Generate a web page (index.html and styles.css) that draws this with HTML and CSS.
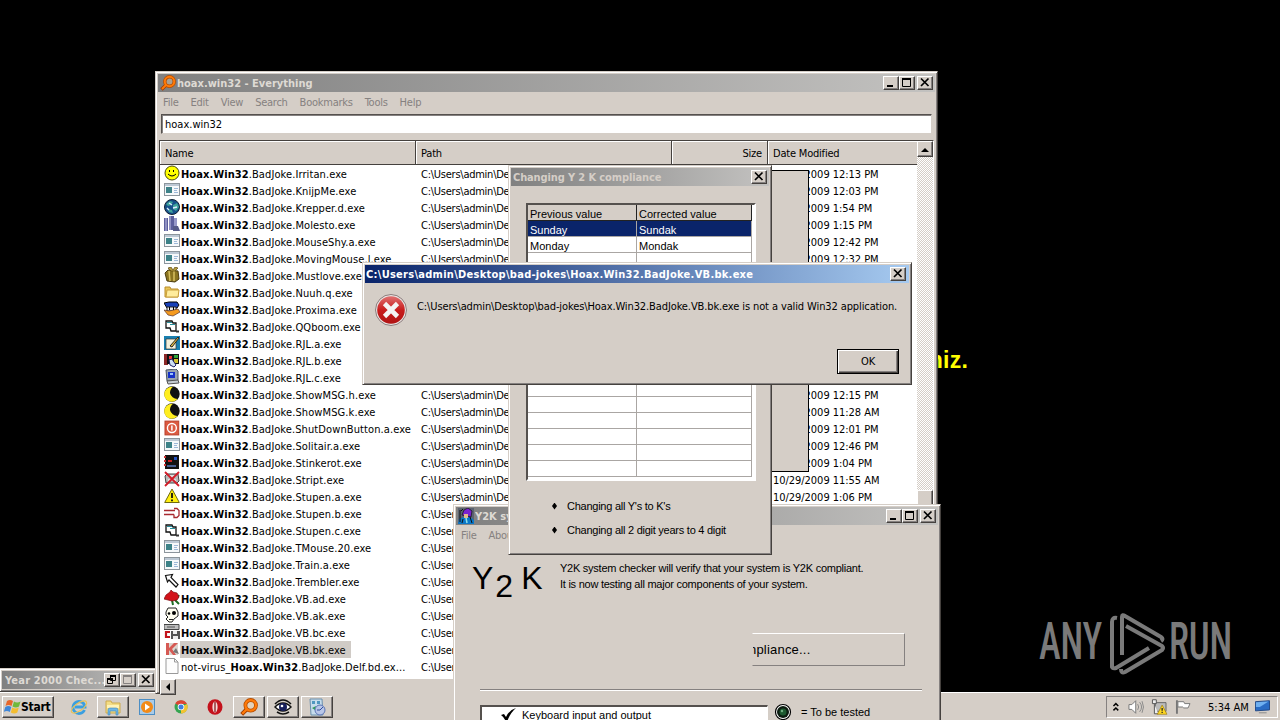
FILE: index.html
```
<!DOCTYPE html>
<html lang="en">
<head>
    <meta charset="UTF-8">
    <title>Desktop</title>
    <link rel="stylesheet" href="styles.css">
</head>
<body>
    <!-- icon sprite -->
    <svg class="sprite" width="0" height="0">
        <symbol id="i-smile" viewBox="0 0 16 16"><circle cx="8" cy="8" r="7" fill="#ff0" stroke="#4a4a10"/><path d="M5.500 5v2M9.500 5v2" stroke="#000"/><path d="M4 9q4 4 8 0" fill="none" stroke="#000"/></symbol>
        <symbol id="i-app" viewBox="0 0 16 16"><rect x=".5" y="1.500" width="15" height="12" fill="#f6f8fa" stroke="#8c959c"/><path d="M1 3h14" stroke="#bcc8d4" stroke-width="2"/><rect x="2" y="5" width="6" height="6" fill="#3d8288"/><path d="M10 6.500h4M10 8.500h3M10 10.500h4" stroke="#9db8d8"/></symbol>
        <symbol id="i-globe" viewBox="0 0 16 16"><circle cx="8" cy="8" r="7.500" fill="#17508a" stroke="#123"/><path d="M2 5l4-3 3 1-2 3-3 1zM9 6l4-2 2 4-3 4-3-2zM4 10l4 1 1 3-4-1z" fill="#3fa39a"/><path d="M5 4l3 2M9 9l4-1M3 9l2 2" stroke="#def" stroke-width="1.300"/></symbol>
        <symbol id="i-books" viewBox="0 0 16 16"><path d="M0 2h4v13H0zM5 0h5v14H5z" fill="#5c5f9c"/><path d="M10 2h3v9h-3z" fill="#9698c8"/><path d="M2 2v13M6 0v14" stroke="#c3c4e8"/><path d="M9 10h5l2 5H9z" fill="#555a88"/></symbol>
        <symbol id="i-gift" viewBox="0 0 16 16"><path d="M1 6l3-3 10 1 1 8-4 3-8-1z" fill="#8a7420" stroke="#4c3d10"/><path d="M5 4l1 10M10 4v10" stroke="#d8c060" stroke-width="1.500"/><path d="M7 4L4 1l3-1 2 3 2-3 3 1-3 3z" fill="#b49b3c" stroke="#5b4710" stroke-width=".7"/></symbol>
        <symbol id="i-folder" viewBox="0 0 16 16"><path d="M1 13V3h5l1 2h7v8z" fill="#e9c557" stroke="#b98d2a"/><path d="M2 13l1-7h12l-1 7z" fill="#ffec9c" stroke="#c99f3c"/></symbol>
        <symbol id="i-duck" viewBox="0 0 16 16"><path d="M0 2l5-1 8 0 2 3-2 3H3z" fill="#1840b8" stroke="#000"/><path d="M3 6h9v4H3z" fill="#eee" stroke="#222"/><path d="M0 9l5 1 9-2 2 3-7 4-5-1z" fill="#f59a1e" stroke="#533" stroke-width=".7"/><path d="M5.500 6v3M9.500 6v3" stroke="#000"/></symbol>
        <symbol id="i-vb" viewBox="0 0 16 16"><path d="M2 3h6l1 2h3v8H7l-1-3H2z" fill="#fff" stroke="#111" stroke-width="1.300"/><path d="M3 4.500h5M6 6.500h5" stroke="#278f9c"/><path d="M12 13.500h3" stroke="#333" stroke-width="2"/></symbol>
        <symbol id="i-pen" viewBox="0 0 16 16"><path d="M0 1h16v14H0z" fill="#1980b0"/><path d="M2 4h10v10H2z" fill="#f4f1dc" stroke="#333" stroke-width=".7"/><path d="M6 11l8-9 1 1-7 9z" fill="#e6bd40" stroke="#222"/></symbol>
        <symbol id="i-win" viewBox="0 0 16 16"><path d="M0 2h4v11H0z" fill="#8b2828"/><path d="M3 2h12v10H3z" fill="#111"/><path d="M5 4h3v3H5z" fill="#e33"/><path d="M10 3h4v3h-4z" fill="#2fa63a"/><path d="M10 7h4v4h-4z" fill="#d5c02a"/><path d="M5 8l3-1 4 6-2 2-4-2z" fill="#cfe1f4" stroke="#226"/></symbol>
        <symbol id="i-pc" viewBox="0 0 16 16"><path d="M2 1l10-1 2 2v9l-2 1H3z" fill="#9aa5b0" stroke="#4a5560"/><path d="M4 3h7v6H4z" fill="#1532c8"/><path d="M6 4h3v2H6z" fill="#9ac4ff"/><path d="M3 12l11-1 1 3-11 1z" fill="#c6ccd2" stroke="#555"/></symbol>
        <symbol id="i-moon" viewBox="0 0 16 16"><circle cx="8" cy="8" r="7.700" fill="#111"/><path d="M9 .8a7.500 7.500 0 1 0 4.500 12.200A7.500 7.500 0 0 1 6 7q0-4 3-6.200z" fill="#ffee20"/></symbol>
        <symbol id="i-power" viewBox="0 0 16 16"><rect x="1" y="1" width="14" height="14" fill="#dc5a41" stroke="#b8402c"/><circle cx="8" cy="8" r="4.500" fill="none" stroke="#fff" stroke-width="1.400"/><path d="M8 5.500v5" stroke="#fff" stroke-width="1.500"/></symbol>
        <symbol id="i-stink" viewBox="0 0 16 16"><path d="M1 1h14v14H1z" fill="#111"/><path d="M0 3h2M0 7h2M0 11h2" stroke="#c33" stroke-width="2"/><path d="M4 6h4v2H4z" fill="#c22"/><path d="M10 3h3v3h-3z" fill="#2653c0"/><path d="M3 12h9" stroke="#5a78bb" stroke-width="1.500"/></symbol>
        <symbol id="i-cross" viewBox="0 0 16 16"><path d="M1 5l2-2h11l1 7-2 2H2z" fill="#b9b9b9" stroke="#444"/><path d="M4 5h8M4 9h8" stroke="#eee" stroke-width="1.500"/><path d="M1 1l14 14M15 1L1 15" stroke="#d41c28" stroke-width="1.800"/></symbol>
        <symbol id="i-warn" viewBox="0 0 16 16"><path d="M8 1l7.300 13.500H.7z" fill="#ffee10" stroke="#706a10"/><path d="M8 5v5" stroke="#111" stroke-width="1.800"/><path d="M8 11.500v1.700" stroke="#111" stroke-width="1.800"/></symbol>
        <symbol id="i-fork" viewBox="0 0 16 16"><path d="M0 5.500h11M0 9.500h10M10 3.500h3l2 2v5l-2 2h-3v-3" fill="none" stroke="#a82a30" stroke-width="1.300"/></symbol>
        <symbol id="i-arrow" viewBox="0 0 16 16"><path d="M1.500 2.500l7-1-1.500 3 7 7-2 2.500-7-7-1.500 2z" fill="#fff" stroke="#111" stroke-width="1.200"/></symbol>
        <symbol id="i-rose" viewBox="0 0 16 16"><path d="M8 10l1 5M11 10l4 4M15 5l-2 3" stroke="#1c6d22" stroke-width="2"/><path d="M0 9l2-4 4-3 1-2 2 2 4 1 2 4-2 3-5 1-4-1z" fill="#d3131a" stroke="#7a0c10" stroke-width=".7"/></symbol>
        <symbol id="i-skull" viewBox="0 0 16 16"><path d="M2 5l2-4h8l2 4v4l-4 3-2 3H5l-3-3 2-2-2-2z" fill="#fffef0" stroke="#222"/><circle cx="5" cy="6.500" r="1.300"/><circle cx="10" cy="6" r="2"/><path d="M5 12.500h4" stroke="#222"/></symbol>
        <symbol id="i-disk" viewBox="0 0 16 16"><path d="M0 .5h15v5H0z" fill="#bdbdbd" stroke="#444"/><path d="M3 3h8" stroke="#555"/><path d="M7 7h9v8H7z" fill="#555"/><path d="M9 7h4v3H9zM9 12h5v3H9z" fill="#eee"/><path d="M6 8H2v5h4" fill="none" stroke="#c2141c" stroke-width="2.200"/></symbol>
        <symbol id="i-kasper" viewBox="0 0 16 16"><path d="M2 2h12v12H2z" fill="#dcd6d0"/><path d="M2 2h3v5l5-5h4L8 8l4 6H9L5 9v5H2z" fill="#d65a54"/><path d="M9 11l3-4 3 6z" fill="#777"/></symbol>
        <symbol id="i-file" viewBox="0 0 16 16"><path d="M2 .5h8.500L14 4v11.500H2z" fill="#fdfdfd" stroke="#999"/><path d="M10.500.5V4H14" fill="none" stroke="#999"/></symbol>
        <symbol id="i-search" viewBox="0 0 16 16"><path d="M6 10l-4.500 4.500" stroke="#a03c00" stroke-width="3.600"/><circle cx="9.500" cy="6.500" r="4.700" fill="#ffd9a8" fill-opacity=".35" stroke="#b44c00" stroke-width="3.400"/><circle cx="9.500" cy="6.500" r="4.700" fill="none" stroke="#ff7a08" stroke-width="2"/><path d="M6 10l-4 4" stroke="#ff7a08" stroke-width="2"/></symbol>
        <symbol id="i-wizard" viewBox="0 0 16 16"><path d="M0 0h16v16H0z" fill="#5b6370"/><path d="M0 16l1-5 5-2h6l4 3v4z" fill="#0b77c8"/><path d="M4 7l2-5 4-2 4 3-1 6z" fill="#7a22d0" stroke="#111" stroke-width=".7"/><path d="M6 6h4v4H6z" fill="#e6b98a"/><path d="M2 2v12M3 3l2-2M12 9l2 6M5 11l-1 4" stroke="#111"/><path d="M8 10l1 5" stroke="#8fe0e8" stroke-width="1.500"/></symbol>
        <symbol id="i-min" viewBox="0 0 12 11"><path d="M2 9h6" stroke="#000" stroke-width="2"/></symbol>
        <symbol id="i-max" viewBox="0 0 12 11"><path d="M1.500 1.500h8v8h-8z" fill="none" stroke="currentColor"/><path d="M1 2h9" stroke="currentColor" stroke-width="2"/></symbol>
        <symbol id="i-restore" viewBox="0 0 12 11"><path d="M4.500 1.500h5v5h-5z" fill="none" stroke="#000"/><path d="M4 2h6M1 5h6" stroke="#000" stroke-width="2"/><path d="M1.500 4.500h5v5h-5z" fill="none" stroke="#000"/></symbol>
        <symbol id="i-close" viewBox="0 0 12 11"><path d="M2 1.500l7.500 7.500M9.500 1.500L2 9" stroke="#000" stroke-width="1.700"/></symbol>
    </svg>

    <div class="desktop">
        <div class="joke-text">niz.</div>

        <svg class="watermark" viewBox="0 0 200 70" width="200" height="70">
            <g fill="#7a7a7a" font-family="Roboto, sans-serif" font-size="52" font-weight="500">
                <text x="4" y="54" textLength="63" lengthAdjust="spacingAndGlyphs">ANY</text>
                <text x="134" y="54" textLength="63" lengthAdjust="spacingAndGlyphs">RUN</text>
            </g>
            <g fill="none" stroke="#7a7a7a" stroke-width="4" stroke-linejoin="round">
                <path d="M82 13q-5-1-5 4v45q1 2 4 1l33-20"/>
                <path d="M87 50V12q0-3 3-1l36 21q3 2 0 4"/>
                <path d="M91 21l36 20q2 2 0 4L90 67q-4 2-4-3"/>
            </g>
        </svg>

        <div class="window mdi">
            <div class="titlebar">
                <span class="title">Year 2000 Chec...</span>
                <span class="btn"><svg><use href="#i-restore"/></svg></span>
                <span class="btn off"><svg><use href="#i-max"/></svg></span>
                <span class="btn close"><svg><use href="#i-close"/></svg></span>
            </div>
        </div>

        <div class="taskbar">
            <div class="start">
                <svg width="17" height="16" viewBox="0 0 17 16"><path d="M3 2q3-2 6 0L7.500 7q-3-2-6 0z" fill="#e8662a"/><path d="M10 2.500q3 2 6.500 0L15 7.500q-3 2-6.500 0z" fill="#71b93c"/><path d="M1.300 8q3-2 6 0L5.800 13q-3-2-6 0z" fill="#3f86d8"/><path d="M8.300 8.500q3 2 6.500 0l-1.500 5q-3 2-6.500 0z" fill="#f4bd30"/></svg>
                <b>Start</b>
            </div>
            <div class="tasks">
                <span class="task"><svg viewBox="0 0 18 18"><path d="M14.500 12a6 6 0 1 1 .5-3H5" fill="none" stroke="#3a9fe0" stroke-width="2.800"/><ellipse cx="9" cy="9" rx="9" ry="3.800" transform="rotate(-35 9 9)" fill="none" stroke="#e8c25a" stroke-width="1.200"/></svg></span>
                <span class="task open"><svg viewBox="0 0 18 18"><path d="M2 15V3h5l1 2h8v10z" fill="#f3dc84" stroke="#cdaa4c"/><path d="M3 7h12v3H3z" fill="#fff3b8"/><path d="M4 17v-5q0-2 2-2h6q2 0 2 2v5h-2v-4H6v4z" fill="#6db6e6" stroke="#3f86b8" stroke-width=".6"/></svg></span>
                <span class="task"><svg viewBox="0 0 18 18"><rect x="1.500" y="1.500" width="15" height="15" fill="#a9cbe8" stroke="#4c8ec4"/><circle cx="9" cy="9" r="6" fill="#f28a18"/><path d="M7 5.500l5 3.500-5 3.500z" fill="#fff"/></svg></span>
                <span class="task"><svg viewBox="0 0 18 18"><circle cx="9" cy="9" r="6.500" fill="#35a450"/><path d="M9 9L3.300 5.500A6.600 6.600 0 0 1 15 6H9z" fill="#dc4434"/><path d="M9 9l6-3a6.600 6.600 0 0 1-6 9.500z" fill="#f3c330"/><circle cx="9" cy="9" r="3.300" fill="#fff"/><circle cx="9" cy="9" r="2.500" fill="#3f7ede"/></svg></span>
                <span class="task"><svg viewBox="0 0 18 18"><ellipse cx="9" cy="9" rx="7.500" ry="7.800" fill="#c4121c"/><ellipse cx="9" cy="9" rx="2.600" ry="5.600" fill="#f4d8d8"/><path d="M9 4v10" stroke="#7a0c10" stroke-width="1.200"/></svg></span>
                <span class="task open"><svg viewBox="0 0 16 16"><use href="#i-search"/></svg></span>
                <span class="task open"><svg viewBox="0 0 18 18"><path d="M1 9q8-8 16 0-8 8-16 0z" fill="#fff" stroke="#111" stroke-width="1.500"/><circle cx="9" cy="9" r="4" fill="#18205c"/><circle cx="8" cy="8" r="1.300" fill="#fff"/><path d="M1 6q8-8 16 0M3 14q6 4 12 0" fill="none" stroke="#111" stroke-width="1.600"/></svg></span>
                <span class="task open"><svg viewBox="0 0 18 18"><path d="M2 1h12l1 16H3z" fill="#c6dcec" stroke="#6b90ae"/><path d="M4 3h3v3H4zM9 3h3v3H9z" fill="#4f97c0"/><path d="M4 10l4-2-1 4z" fill="#2f9c5a"/><circle cx="12" cy="12" r="5" fill="#b8c6e8" stroke="#5c74b4"/><path d="M12 12l3-3M12 12H9" stroke="#334c9c"/></svg></span>
            </div>
            <div class="tray">
                <svg width="9" height="12" viewBox="0 0 9 12"><path d="M1.500 5l2.500-2.500L6.500 5M1.500 9.500L4 7l2.500 2.500" fill="none" stroke="#000" stroke-width="1.500"/></svg>
                <svg width="17" height="16" viewBox="0 0 17 16"><path d="M1 5.500h3l4-4v13l-4-4H1z" fill="#fff" stroke="#777"/><path d="M10 5q2 3 0 6M12 3q4 5 0 10M14.500 2q3 6 0 12" fill="none" stroke="#888"/></svg>
                <svg width="17" height="16" viewBox="0 0 17 16"><path d="M4.500 3.500h11v9h-11z" fill="#bbb" stroke="#666"/><path d="M1.500.5h4v4h-4zM3.500 5v10h4" fill="#eee" stroke="#555"/><path d="M11.500 6l5 9.500h-10z" fill="#ffd820" stroke="#9a7a10" stroke-width=".7"/><path d="M11.500 9v3M11.500 13v1.300" stroke="#222" stroke-width="1.300"/></svg>
                <svg width="17" height="16" viewBox="0 0 17 16"><path d="M2 1v14" stroke="#777" stroke-width="2"/><path d="M3 2.500h6l1 2h5.500l-2 4.500H9L8 8H3z" fill="#fff" stroke="#777"/></svg>
                <span class="clock">5:34 AM</span>
                <svg width="16" height="14" viewBox="0 0 16 14"><path d="M.5 1.500L15 .5v9.500l-14.500 1z" fill="#2a6cc4" stroke="#234a86"/><path d="M1 2l13-.8L5 7 1 7z" fill="#6fb0f0"/><path d="M4 13h8" stroke="#888"/></svg>
            </div>
        </div>

        <div class="window everything">
            <div class="titlebar">
                <svg class="title-icon"><use href="#i-search"/></svg>
                <span class="title">hoax.win32 - Everything</span>
                <span class="btn"><svg><use href="#i-min"/></svg></span>
                <span class="btn"><svg><use href="#i-max"/></svg></span>
                <span class="btn close"><svg><use href="#i-close"/></svg></span>
            </div>
            <div class="menu">
                <span>File</span><span>Edit</span><span>View</span><span>Search</span><span>Bookmarks</span><span>Tools</span><span>Help</span>
            </div>
            <div class="query">hoax.win32</div>
            <div class="results">
                <div class="table">
                    <div class="cols head">
                        <span>Name</span><span>Path</span><span class="size">Size</span><span>Date Modified</span>
                    </div>
                    <div id="rows"></div>
                    <div class="hscroll"><span class="arrow"><svg width="6" height="8"><path d="M5 0v8L1 4z"/></svg></span></div>
                </div>
                <div class="vscroll">
                    <span class="arrow"><svg width="8" height="5"><path d="M0 5h8L4 1z"/></svg></span>
                    <span class="thumb"></span>
                </div>
            </div>
        </div>

        <div class="panel"></div>

        <div class="window y2k">
            <div class="titlebar">
                <svg class="title-icon"><use href="#i-wizard"/></svg>
                <span class="title">Y2K system checker</span>
                <span class="btn"><svg><use href="#i-min"/></svg></span>
                <span class="btn"><svg><use href="#i-max"/></svg></span>
                <span class="btn close"><svg><use href="#i-close"/></svg></span>
            </div>
            <div class="menu"><span>File</span><span>About</span></div>
            <div class="intro">
                <div class="y2k-logo"><span>Y</span><span class="two">2</span><span>K</span></div>
                <div class="intro-text">
                    <p>Y2K system checker will verify that your system is Y2K compliant.</p>
                    <p>It is now testing all major components of your system.</p>
                </div>
            </div>
            <div class="big-button"><span>npliance...</span></div>
            <div class="rule"></div>
            <div class="tests">
                <div class="test-list">
                    <svg width="16" height="16" viewBox="0 0 16 16"><path d="M0 8l3-1 2 3q3-7 10-9-6 5-9 14H5Q3 10 0 8z"/></svg>
                    <span>Keyboard input and output</span>
                </div>
                <svg class="led" width="18" height="18" viewBox="0 0 18 18"><circle cx="9" cy="9" r="7.500" fill="#fff" stroke="#000" stroke-width="1.200"/><circle cx="9" cy="9" r="6" fill="#0c1c10"/><circle cx="9" cy="9" r="3.500" fill="#1d5a30"/><circle cx="8" cy="8" r="1.200" fill="#6fae80"/></svg>
                <span class="legend">= To be tested</span>
            </div>
        </div>

        <div class="window changing">
            <div class="titlebar">
                <span class="title">Changing Y 2 K compliance</span>
                <span class="btn close"><svg><use href="#i-close"/></svg></span>
            </div>
            <div class="grid-box">
                <div class="grid-row grid-head"><span>Previous value</span><span>Corrected value</span></div>
                <div class="grid-row selected"><span>Sunday</span><span>Sundak</span></div>
                <div class="grid-row"><span>Monday</span><span>Mondak</span></div>
                <div id="emptyRows"></div>
            </div>
            <ul class="steps">
                <li><i></i><span>Changing all Y's to K's</span></li>
                <li><i></i><span>Changing all 2 digit years to 4 digit</span></li>
            </ul>
        </div>

        <div class="window error">
            <div class="titlebar">
                <span class="title">C:\Users\admin\Desktop\bad-jokes\Hoax.Win32.BadJoke.VB.bk.exe</span>
                <span class="btn close"><svg><use href="#i-close"/></svg></span>
            </div>
            <div class="message">
                <svg width="34" height="34" viewBox="0 0 34 34"><defs><linearGradient id="red" x2="0" y2="1"><stop offset="0" stop-color="#e07070"/><stop offset=".5" stop-color="#c81c1c"/><stop offset="1" stop-color="#b01414"/></linearGradient></defs><circle cx="17" cy="17" r="15.500" fill="#e8e4e2" stroke="#8c7c7c"/><circle cx="17" cy="17" r="13.800" fill="url(#red)"/><path d="M10.500 10.500l13 13M23.500 10.500l-13 13" stroke="#f4f4f4" stroke-width="4.600"/></svg>
                <p>C:\Users\admin\Desktop\bad-jokes\Hoax.Win32.BadJoke.VB.bk.exe is not a valid Win32 application.</p>
            </div>
            <div class="ok"><span>OK</span></div>
        </div>
    </div>
    <script src="script.js"></script>
</body>
</html>
```
FILE: styles.css
```
* {
    margin: 0;
    padding: 0;
    box-sizing: border-box;
}

body {
    width: 1280px;
    height: 720px;
    overflow: hidden;
    background: #000;
    color: #000;
    font-family: "DejaVu Sans Condensed", "DejaVu Sans", sans-serif;
    font-stretch: condensed;
    font-size: 11px;
    line-height: 16px;
    letter-spacing: -0.25px;
    white-space: nowrap;
}

.sprite {
    position: absolute;
}

.desktop {
    position: relative;
    width: 1280px;
    height: 720px;
    overflow: hidden;
}

.joke-text {
    position: absolute;
    right: 312px;
    top: 346px;
    color: #ff0;
    font: bold 23px/28px "Liberation Sans", sans-serif;
    letter-spacing: 0.2px;
}

.watermark {
    position: absolute;
    left: 1035px;
    top: 605px;
    overflow: visible;
}

/* windows */
.window {
    position: absolute;
    background: #d5cec7;
    border: 1px solid;
    border-color: #d5cec7 #45413e #45413e #d5cec7;
    box-shadow: inset 1px 1px #fff, inset -1px -1px #858180;
    padding: 2px;
}

.titlebar {
    display: flex;
    align-items: center;
    height: 18px;
    padding: 0 2px;
    background: linear-gradient(to right, #808080, #c3c2c0);
    color: #dedad4;
    font-weight: bold;
    letter-spacing: 0;
}

.title {
    flex: 1;
    padding-top: 2px;
    overflow: hidden;
}

.title-icon {
    width: 16px;
    height: 16px;
    margin-right: 1px;
}

.btn {
    width: 16px;
    height: 14px;
    background: #d5cec7;
    border: 1px solid;
    border-color: #fff #45413e #45413e #fff;
    box-shadow: inset -1px -1px #858180;
    color: #000;
}

.btn svg {
    display: block;
    width: 12px;
    height: 11px;
    margin-left: 1px;
}

.btn.off {
    color: #858180;
}

.btn.close {
    margin-left: 2px;
}

.menu {
    display: flex;
    height: 20px;
    padding-top: 2px;
    align-items: center;
    color: #858180;
}

/* minimized child window */
.mdi {
    left: -1px;
    top: 668px;
    width: 158px;
    height: 24px;
}

.mdi .titlebar {
    padding: 0 0 0 3px;
}

.mdi .title {
    letter-spacing: 0.2px;
}

/* Everything */
.everything {
    left: 155px;
    top: 71px;
    width: 783px;
    height: 623px;
}

.everything .menu {
    padding-left: 5px;
    gap: 12px;
}

.query {
    height: 20px;
    margin: 2px 3px 6px 3px;
    padding: 2px 3px;
    background: #fff;
    border: 1px solid;
    border-color: #55514e #d5cec7 #d5cec7 #55514e;
    box-shadow: inset 1px 1px #858180;
    letter-spacing: 0;
}

.results {
    display: flex;
    height: 553px;
    margin: 0 1px;
    border: 1px solid #45413e;
    border-right-color: #fff;
}

.table {
    width: 757px;
    background: #fff;
}

.cols {
    display: grid;
    grid-template-columns: 256px 256px 96px 149px;
    grid-template-rows: 17px;
    height: 17px;
}

.head {
    grid-template-rows: 23px;
    height: 24px;
    background: #d5cec7;
    border-bottom: 1px solid #45413e;
    letter-spacing: -0.2px;
}

.head span {
    padding: 5px 5px 0;
    border-right: 1px solid #45413e;
    box-shadow: inset 1px 1px #fff;
}

.head span:last-child {
    border-right: 0;
}

.head .size {
    text-align: right;
}

.name {
    display: flex;
    height: 17px;
    padding-left: 4px;
    letter-spacing: 0.1px;
}

.name svg {
    width: 16px;
    height: 16px;
}

.name span {
    height: 17px;
    padding: 1px 5px 0 1px;
    line-height: 18px;
}

.name b {
    letter-spacing: 0.07px;
}

.picked .name span {
    background: #d0cbc6;
}

.cell {
    height: 17px;
    padding: 1px 0 0 5px;
    line-height: 18px;
    overflow: hidden;
}

.date {
    letter-spacing: -0.04px;
}

.hscroll {
    height: 16px;
    margin-top: 4px;
    background: #d5cec7;
}

.arrow {
    display: flex;
    width: 16px;
    height: 16px;
    align-items: center;
    justify-content: center;
    background: #d5cec7;
    border: 1px solid;
    border-color: #fff #45413e #45413e #fff;
    box-shadow: inset -1px -1px #858180;
}

.vscroll {
    width: 16px;
    background: repeating-conic-gradient(#d5cec7 0 25%, #fff 0 50%) 0 0 / 2px 2px;
}

.thumb {
    display: block;
    height: 60px;
    margin-top: 333px;
    background: #d5cec7;
    border: 1px solid;
    border-color: #fff #45413e #45413e #fff;
    box-shadow: inset -1px 0 #858180;
}

.panel {
    position: absolute;
    left: 760px;
    top: 170px;
    width: 49px;
    height: 302px;
    background: #d5cec7;
    border: 1px solid #000;
}

/* Y2K checker */
.y2k {
    left: 453px;
    top: 504px;
    width: 488px;
    height: 230px;
    font-family: "Liberation Sans", sans-serif;
}

.y2k .titlebar,
.y2k .menu,
.changing .titlebar {
    font-family: "DejaVu Sans Condensed", "DejaVu Sans", sans-serif;
}

.y2k .menu {
    padding-left: 5px;
    gap: 12px;
}

.intro {
    display: flex;
    height: 88px;
    padding: 14px 0 0 16px;
}

.intro-text {
    padding-top: 1px;
}

.y2k-logo {
    display: flex;
    width: 88px;
    font-size: 32px;
    line-height: 38px;
    letter-spacing: 0;
}

.y2k-logo .two {
    margin: 8px 8px 0 2px;
}

.big-button {
    width: 153px;
    height: 33px;
    margin-left: 296px;
    overflow: hidden;
    border: 1px solid;
    border-color: #fff #858180 #858180 #d5cec7;
    font-size: 13px;
    line-height: 31px;
    letter-spacing: 0.2px;
}

.big-button span {
    margin-left: -4px;
}

.rule {
    height: 2px;
    margin: 23px 16px 0 24px;
    border-top: 1px solid #858180;
    border-bottom: 1px solid #fff;
}

.tests {
    display: flex;
    margin: 14px 0 0 24px;
    letter-spacing: 0;
}

.test-list {
    display: flex;
    width: 288px;
    height: 40px;
    padding: 0 0 0 19px;
    background: #fff;
    border: 2px solid #55514e;
    border-right: 1px solid #fff;
}

.test-list span {
    margin-left: 5px;
}

.led {
    margin: -2px 9px 0 6px;
}

.legend {
    margin-top: -1px;
}

/* Changing Y 2 K compliance */
.changing {
    left: 508px;
    top: 165px;
    width: 264px;
    height: 390px;
    font-family: "Liberation Sans", sans-serif;
}

.changing .title {
    color: #d5cec7;
    letter-spacing: -0.12px;
}

.grid-box {
    width: 230px;
    height: 278px;
    margin: 17px 0 0 15px;
    background: #fff;
    border: 2px solid;
    border-color: #55514e #fff #fff #55514e;
    letter-spacing: 0;
}

.grid-row {
    display: grid;
    grid-template-columns: 109px 115px;
    grid-template-rows: 16px;
    width: 224px;
    height: 16px;
}

.grid-row span {
    padding: 1px 0 0 2px;
    line-height: 17px;
    border-right: 1px solid #aaa6a3;
    border-bottom: 1px solid #aaa6a3;
}

.grid-head span {
    background: #d5cec7;
    border-color: #222;
}

.selected span {
    background: #0a246a;
    color: #fff;
}

.steps {
    list-style: none;
    margin: 17px 0 0 41px;
}

.steps li {
    display: flex;
    align-items: center;
    height: 16px;
    margin-bottom: 8px;
}

.steps i {
    width: 5px;
    height: 7px;
    margin-right: 10px;
    background: #000;
    clip-path: polygon(50% 0, 100% 50%, 50% 100%, 0 50%);
}

/* error box */
.error {
    left: 362px;
    top: 262px;
    width: 550px;
    height: 123px;
}

.error .titlebar {
    background: linear-gradient(to right, #0a246a, #a6caf0);
    color: #fff;
    padding: 0 3px 0 1px;
    letter-spacing: 0.27px;
}

.message {
    display: flex;
    padding: 10px 0 0 9px;
    letter-spacing: -0.11px;
}

.message p {
    margin: 6px 0 0 9px;
}

.ok {
    width: 62px;
    height: 25px;
    margin: 22px 0 0 472px;
    border: 1px solid #000;
    box-shadow: inset 1px 1px #fff, inset -1px -1px #45413e, inset -2px -2px #858180;
    text-align: center;
    line-height: 23px;
}

/* taskbar */
.taskbar {
    position: absolute;
    left: 0;
    top: 692px;
    display: flex;
    width: 1280px;
    height: 28px;
    padding: 4px 2px 2px;
    background: #d5cec7;
    box-shadow: inset 0 1px #fff;
}

.start {
    display: flex;
    align-items: center;
    width: 52px;
    height: 22px;
    padding-left: 1px;
    font-size: 12px;
    border: 1px solid;
    border-color: #fff #45413e #45413e #fff;
    box-shadow: inset -1px -1px #858180;
}

.tasks {
    display: flex;
    gap: 2px;
    margin-left: 9px;
}

.task {
    display: flex;
    width: 32px;
    height: 22px;
    align-items: center;
    justify-content: center;
}

.task svg {
    width: 18px;
    height: 18px;
}

.open {
    border: 1px solid;
    border-color: #fff #45413e #45413e #fff;
    box-shadow: inset -1px -1px #858180;
}

.tray {
    display: flex;
    align-items: center;
    width: 172px;
    height: 22px;
    margin-left: auto;
    padding-left: 5px;
    border: 1px solid;
    border-color: #858180 #fff #fff #858180;
}

.tray svg {
    margin-right: 7px;
}

.tray .clock {
    width: 48px;
    margin-left: 10px;
    padding-top: 2px;
    letter-spacing: 0;
}
```
FILE: script.js
```
const files = [
    ['smile', 'Irritan', '12:13 PM'],
    ['app', 'KnijpMe', '12:03 PM'],
    ['globe', 'Krepper.d', '1:54 PM'],
    ['books', 'Molesto', '1:15 PM'],
    ['app', 'MouseShy.a', '12:42 PM'],
    ['app', 'MovingMouse.l', '12:32 PM'],
    ['gift', 'Mustlove', '12:10 PM'],
    ['folder', 'Nuuh.q', '12:11 PM'],
    ['duck', 'Proxima', '1:20 PM'],
    ['vb', 'QQboom', '1:22 PM'],
    ['pen', 'RJL.a', '12:20 PM'],
    ['win', 'RJL.b', '12:21 PM'],
    ['pc', 'RJL.c', '12:22 PM'],
    ['moon', 'ShowMSG.h', '12:15 PM'],
    ['moon', 'ShowMSG.k', '11:28 AM'],
    ['power', 'ShutDownButton.a', '12:01 PM'],
    ['app', 'Solitair.a', '12:46 PM'],
    ['stink', 'Stinkerot', '1:04 PM'],
    ['cross', 'Stript', '11:55 AM'],
    ['warn', 'Stupen.a', '1:06 PM'],
    ['fork', 'Stupen.b', '1:06 PM'],
    ['vb', 'Stupen.c', '1:06 PM'],
    ['app', 'TMouse.20', '1:07 PM'],
    ['app', 'Train.a', '1:07 PM'],
    ['arrow', 'Trembler', '1:07 PM'],
    ['rose', 'VB.ad', '1:08 PM'],
    ['skull', 'VB.ak', '1:08 PM'],
    ['disk', 'VB.bc', '1:08 PM'],
    ['kasper', 'VB.bk', '1:08 PM'],
    ['file', null, '1:09 PM']
];

document.getElementById('rows').innerHTML = files.map(([icon, name, time]) => {
    const label = name
        ? `<b>Hoax.Win32</b>.BadJoke.${name}.exe`
        : 'not-virus_<b>Hoax.Win32</b>.BadJoke.Delf.bd.ex...';
    return `
        <div class="cols${name === 'VB.bk' ? ' picked' : ''}">
            <div class="name"><svg><use href="#i-${icon}"/></svg><span>${label}</span></div>
            <div class="cell">C:\\Users\\admin\\Desktop\\bad-jokes</div>
            <div class="cell"></div>
            <div class="cell date">10/29/2009 ${time}</div>
        </div>`;
}).join('');

// blank lines under the two filled ones
document.getElementById('emptyRows').innerHTML =
    '<div class="grid-row"><span></span><span></span></div>'.repeat(14);
```
